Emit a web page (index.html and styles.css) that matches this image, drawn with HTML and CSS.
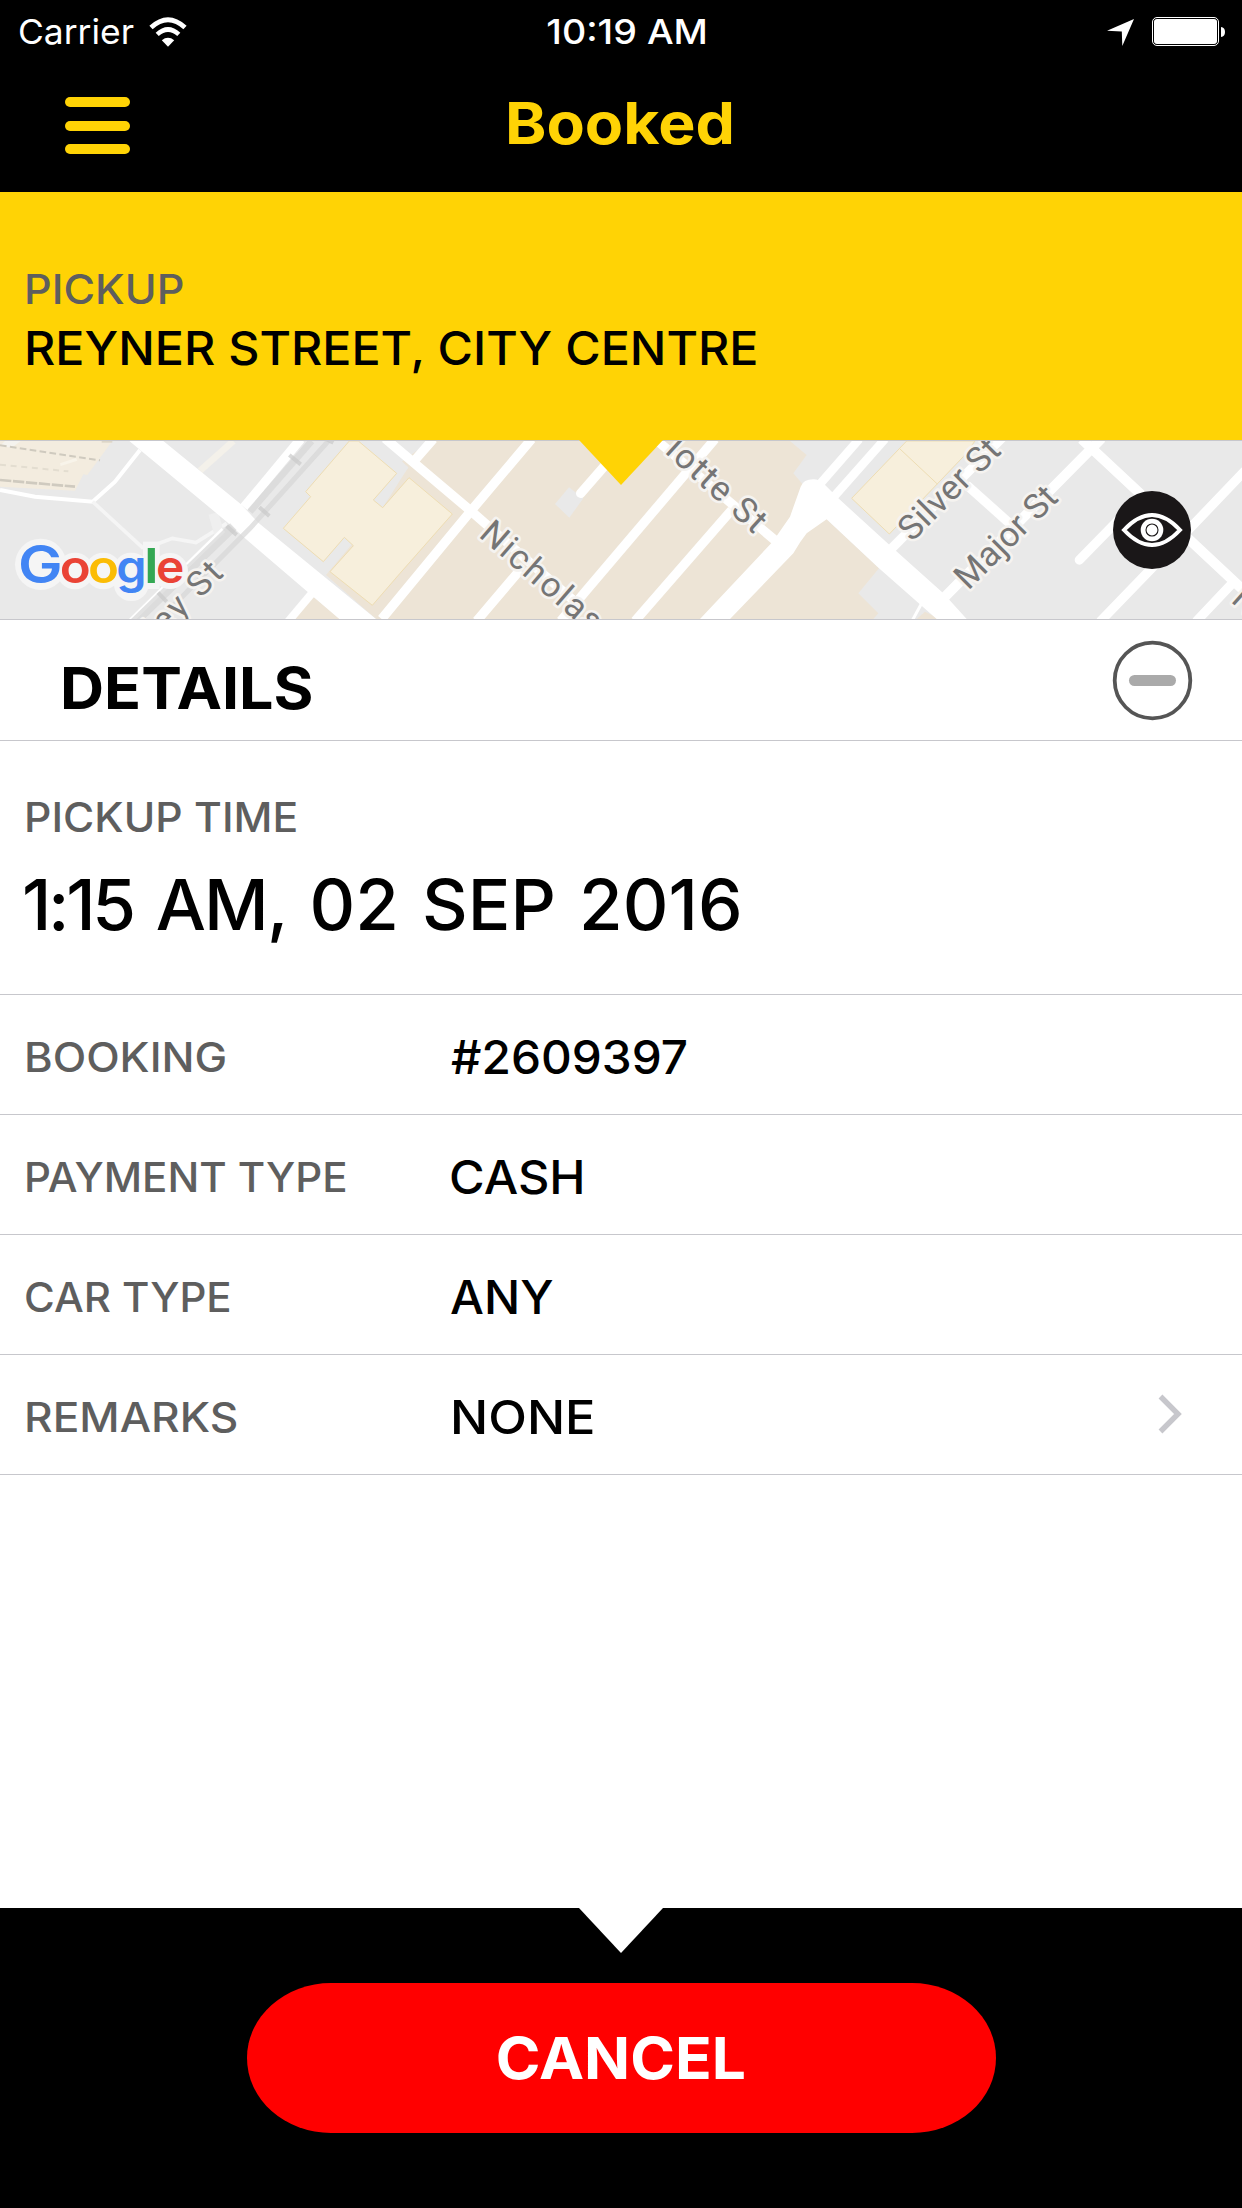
FILE: index.html
```html
<!DOCTYPE html>
<html lang="en">
<head>
<meta charset="utf-8">
<title>Booked</title>
<link rel="stylesheet" href="styles.css">
</head>
<body>
<div class="screen">
  <header class="header">
    <div class="status">
      <div class="status-left">
        <span class="carrier">Carrier</span>
        <svg class="wifi" viewBox="0 0 38 34" width="38" height="34">
          <path d="M19 32.8 12.8 26.2Q19 21.4 25.2 26.2Z" fill="#fff"/>
          <path d="M8.2 20.4Q19 10.6 29.8 20.4" fill="none" stroke="#fff" stroke-width="4.6"/>
          <path d="M2 13.6Q19 -2 36 13.6" fill="none" stroke="#fff" stroke-width="4.8"/>
        </svg>
      </div>
      <span class="clock">10:19 AM</span>
      <div class="status-right">
        <svg viewBox="0 0 27 27" width="27" height="27"><path d="M27 0 15.3 27 14.8 12.5 0 11.8Z" fill="#fff"/></svg>
        <svg class="battery" viewBox="0 0 74 29" width="74" height="29">
          <rect x=".5" y=".5" width="66" height="28" rx="4.5" fill="none" stroke="#fff" stroke-width="1"/>
          <rect x="2" y="2" width="63" height="25" rx="3" fill="#fff"/>
          <path d="M69 10q4 .6 4 5t-4 5Z" fill="#fff"/>
        </svg>
      </div>
    </div>
    <div class="nav">
      <div class="menu"><i></i><i></i><i></i></div>
      <h1 class="title">Booked</h1>
    </div>
  </header>

  <section class="pickup">
    <div class="label pickup-label">PICKUP</div>
    <div class="address">REYNER STREET, CITY CENTRE</div>
    <div class="notch notch-yellow"></div>
  </section>

  <section class="map">
    <svg class="map-art" viewBox="0 33 3726 534" width="1242" height="178" preserveAspectRatio="none">
      <rect y="33" width="3726" height="534" fill="#e9e9e9"/>
      <!-- station -->
      <path d="M0 33H337L262 135 250 133 225 182 0 170Z" fill="#f3ecdf"/>
      <path d="M15 33 0 48 35 53 62 33Z" fill="#f5f3ee"/>
      <g fill="none" stroke="#cfcabf" stroke-width="6">
        <path d="M0 46 300 91" stroke-dasharray="20 10"/>
        <path d="M0 150 225 170" stroke-dasharray="34 5" stroke-width="8"/>
        <path d="M0 104 205 124" stroke-dasharray="18 14" stroke="#e3ddd0"/>
        <path d="M305 35H337" stroke="#ddd6c8"/>
      </g>
      <path d="M180 100 228 84 232 92 182 108Z" fill="#f8f4ea"/>
      <!-- blocks -->
      <path d="M1290 33 1205 95 1225 112 1148 233 978 435 1128 567H2620L2635 550 2575 490 2637 415 2480 268 2410 165 2380 130 2420 75 2370 33Z" fill="#ede4d6"/>
      <path d="M1200 33H1258L1225 62 1200 50ZM1200 88 1225 114 1200 142 1190 130 1200 110Z" fill="#e9e9e9"/>
      <path d="M880 567 940 500 1020 567ZM2750 567 2775 545 2820 567Z" fill="#ede4d6"/>
      <path d="M1048 33H1075L1190 130 1120 210 1148 233 1227 143 1357 252 1200 430 1117 526 990 425 1060 347 1033 322 970 395 850 295 932 200 917 185Z" fill="#f7efdc" stroke="#eeddb3" stroke-width="3"/>
      <path d="M1665 222 1707 172 1750 205 1708 263Z" fill="#e9e9e9"/>
      <path d="M2720 33 2555 205 2668 312 2890 80 2925 33ZM2700 57 2812 162" fill="#f7efdc" stroke="#eeddb3" stroke-width="3"/>
      <!-- minor streets -->
      <g fill="none" stroke="#fff" stroke-width="28">
        <path d="M700 33 600 122" stroke="#f4f1ea" stroke-width="20"/>
        <path d="M0 180 105 200 278 215 345 155 420 60" stroke-width="12"/>
        <path d="M278 215 430 355M450 350 517 325 588 338 680 280" stroke="#f5f5f5" stroke-width="11"/>
        <path d="M640 250 660 320" stroke="#efefef" stroke-width="30"/>
        <path d="M670 300 390 575" stroke-width="16"/>
        <path d="M732 232 902 27"/>
        <path d="M1155 25 1415 245 1730 520"/>
        <path d="M1595 27 1415 240 1145 567"/>
        <path d="M865 574 940 485" stroke-width="24"/>
        <path d="M1300 27 1245 90M1430 573 1560 420"/>
        <path d="M2145 27 1760 480 1682 573M1905 573 2195 240"/>
        <path d="M1965 27 2330 335"/>
        <path d="M1742 190 1825 95" stroke-linecap="round"/>
        <path d="M1755 205 1820 130" stroke="#e9e4dc" stroke-width="2"/>
        <path d="M2440 185 2578 27M2502 200 2655 27" stroke-width="26"/>
        <path d="M2675 355 3010 20M2900 165 3040 290"/>
        <path d="M2835 500 3305 25M3245 27 3730 480" stroke-width="30"/>
        <path d="M3238 390 3370 255" stroke-linecap="round"/>
        <path d="M3300 575 3455 415 3735 122M3588 575 3695 462"/>
        <path d="M2735 575 2765 520" stroke-width="9"/>
      </g>
      <!-- main roads -->
      <path d="M388 33H490L722 222 775 278 1128 567H1018L735 325 680 275Z" fill="#fff"/>
      <path d="M2100 567 2318 335 2370 260 2402 170Q2410 148 2440 148 2458 148 2470 160L2515 205 2685 360 2830 490 2900 567H2810L2637 415 2480 268 2420 310Q2400 335 2380 370L2190 567Z" fill="#fff"/>
      <!-- railway -->
      <g fill="none" stroke="#d5d5d5" stroke-opacity=".7">
        <path d="M935 33 750 245" stroke-width="20"/>
        <path d="M985 33 750 295 480 567" stroke-width="15"/>
        <path d="M700 290 400 580" stroke-width="28"/>
        <path d="M868 75 902 103M778 232 808 258M680 288 710 315M474 488 500 515M975 25 1000 38" stroke="#c9c9c9" stroke-width="12"/>
      </g>
      <!-- street names -->
      <g class="street">
        <text transform="translate(674 434) rotate(-45)" text-anchor="end" textLength="286">ley St</text>
        <text transform="translate(1433 318) rotate(41)" textLength="450">Nicholas</text>
        <text transform="translate(2262 314) rotate(42.5)" text-anchor="end" textLength="366">lotte St</text>
        <text transform="translate(2736 338) rotate(-45)" textLength="384">Silver St</text>
        <text transform="translate(2905 483) rotate(-45)" textLength="388">Major St</text>
        <text transform="translate(3690 514) rotate(42)">N</text>
      </g>
      <!-- light backing behind the logo letters -->
      <g fill="#f5f5f5">
        <circle cx="122" cy="403" r="77"/><circle cx="225" cy="423" r="55"/><circle cx="310" cy="423" r="55"/>
        <rect x="342" y="368" width="104" height="145" rx="50"/><rect x="429" y="335" width="50" height="142"/><circle cx="510" cy="423" r="54"/>
      </g>
      <g class="google">
        <text x="54" y="460" font-size="157" fill="#4285f4" textLength="134" lengthAdjust="spacingAndGlyphs">G</text>
        <text x="179" y="460" font-size="136" fill="#ea4335" textLength="93" lengthAdjust="spacingAndGlyphs">o</text>
        <text x="264" y="460" font-size="136" fill="#fbbc05" textLength="93" lengthAdjust="spacingAndGlyphs">o</text>
        <text x="349" y="460" font-size="136" fill="#4285f4" textLength="91" lengthAdjust="spacingAndGlyphs">g</text>
        <text x="432" y="460" font-size="146" fill="#34a853" textLength="44" lengthAdjust="spacingAndGlyphs">l</text>
        <text x="468" y="460" font-size="136" fill="#ea4335" textLength="85" lengthAdjust="spacingAndGlyphs">e</text>
      </g>
    </svg>
    <svg class="eye" viewBox="-39 -39 78 78" width="78" height="78">
      <circle r="39" fill="#1a1718"/>
      <path d="M-28 0Q0 -30 28 0 0 30 -28 0Z" fill="none" stroke="#fff" stroke-width="4"/>
      <circle r="11.3" fill="#fff"/>
      <circle r="6" fill="none" stroke="#1a1718" stroke-width="1.1"/>
    </svg>
  </section>

  <section class="details-head">
    <h2>DETAILS</h2>
    <svg viewBox="0 0 81 81" width="81" height="81">
      <circle cx="40.5" cy="40.5" r="37.8" fill="none" stroke="#555" stroke-width="3.8"/>
      <rect x="17" y="35" width="47" height="11" rx="5.5" fill="#aaa"/>
    </svg>
  </section>

  <section class="time">
    <div class="label time-label">PICKUP TIME</div>
    <div class="time-value"><span class="hour">1:15</span> <span class="half">AM,</span> 02 SEP 2016</div>
  </section>

  <dl class="rows">
    <div class="row"><dt class="label k-booking">BOOKING</dt><dd class="v-booking">#2609397</dd></div>
    <div class="row"><dt class="label k-payment">PAYMENT TYPE</dt><dd class="v-payment">CASH</dd></div>
    <div class="row"><dt class="label k-car">CAR TYPE</dt><dd class="v-car">ANY</dd></div>
    <div class="row"><dt class="label k-remarks">REMARKS</dt><dd class="v-remarks">NONE</dd>
      <svg class="chevron" viewBox="0 0 24 40" width="24" height="40"><path d="M2.5 2.5 20 20 2.5 37.5" fill="none" stroke="#c7c7cc" stroke-width="5.4"/></svg>
    </div>
  </dl>

  <footer class="footer">
    <div class="notch notch-white"></div>
    <button class="cancel"><span>CANCEL</span></button>
  </footer>
</div>
</body>
</html>
```
FILE: styles.css
```css
* { box-sizing: border-box; }
body { margin: 0; background: #fff; font-family: Inter, "Liberation Sans", sans-serif; color: #000; }
h1, h2, dl, dd { margin: 0; }
svg { display: block; flex: none; }

.screen { width: 1242px; height: 2208px; display: flex; flex-direction: column; overflow: hidden; }

.header { height: 192px; background: #000; }
.status { height: 62px; display: grid; grid-template-columns: 1fr auto 1fr; align-items: center; color: #fff; line-height: 64px; font-size: 34.5px; white-space: nowrap; }
.status-left { display: flex; align-items: center; padding-left: 18px; gap: 18px; }
.carrier { transform: scaleX(1.026); transform-origin: left; }
.wifi { margin-top: -3px; }
.clock { font-weight: 500; transform: translateX(6px) scaleX(1.09); }
.status-right { display: flex; align-items: center; justify-content: flex-end; gap: 18px; padding-right: 16px; }
.battery { margin-top: -2px; }

.nav { height: 130px; padding: 0 0 8px 65px; display: grid; grid-template-columns: 65px 1fr 130px; align-items: center; }
.menu { display: grid; gap: 13.5px; margin-top: 5px; }
.menu i { display: block; height: 10px; border-radius: 5px; background: #ffd305; }
.title { color: #ffd305; font-size: 58px; font-weight: 700; line-height: 70px; text-align: center; transform: translateX(-1px) scaleX(1.08); }

.label { font-size: 40.5px; font-weight: 500; line-height: 54px; color: #5e5e5e; transform-origin: left; white-space: nowrap; }

.pickup { position: relative; height: 248px; padding: 71px 24px 0; background: #ffd305; }
.pickup-label { transform: scaleX(1.065); }
.address { margin-top: 1px; font-size: 46.5px; font-weight: 500; line-height: 60px; transform: scaleX(1.04); transform-origin: left; white-space: nowrap; }

.notch { position: absolute; left: 50%; z-index: 2; width: 84px; height: 45px; margin-left: -42px; clip-path: polygon(0 0, 100% 0, 50% 100%); }
.notch-yellow { top: 100%; background: #ffd305; }
.notch-white { top: 0; background: #fff; }

.map { position: relative; height: 180px; border-top: 1px solid #c7c7cc; border-bottom: 1px solid #c7c7cc; }
.street { font-family: Roboto, sans-serif; font-size: 104px; fill: #757575; stroke: #f5f3f0; stroke-width: 16px; stroke-linejoin: round; paint-order: stroke; }
.google { font-family: Inter, sans-serif; font-weight: 600; }
.eye { position: absolute; left: 1113px; top: 50px; }

.details-head { height: 121px; padding: 0 49px 0 60px; display: flex; align-items: center; justify-content: space-between; border-bottom: 1px solid #c7c7cc; }
.details-head h2 { margin-top: 16px; font-size: 58px; line-height: 70px; font-weight: 700; transform: scaleX(1.052); transform-origin: left; }

.time { height: 254px; padding: 50px 22px 0 24px; border-bottom: 1px solid #c7c7cc; }
.time-label { transform: scaleX(1.054); }
.time-value { margin: 20px 0 0 -2px; font-size: 69.5px; font-weight: 500; line-height: 80px; word-spacing: 4px; transform: scaleX(1.02); transform-origin: left; white-space: nowrap; }
.hour { letter-spacing: -3.3px; }
.half { letter-spacing: -1.8px; }

.row { height: 120px; padding: 5px 60px 0 24px; display: grid; grid-template-columns: 425px 1fr auto; align-items: center; border-bottom: 1px solid #c7c7cc; }
.row .label { justify-self: start; padding-top: 2px; }
.row dd { font-size: 46.5px; font-weight: 500; line-height: 60px; transform-origin: left; }
.k-booking { transform: scaleX(1.078); }
.k-payment { transform: scaleX(1.038); }
.k-car { transform: scaleX(1.037); }
.k-remarks { transform: scaleX(1.092); }
.row .v-booking { padding-left: 2px; transform: scaleX(1.026); }
.v-payment { transform: scaleX(1.047); }
.row .v-car { padding-left: 1px; transform: scaleX(1.029); }
.row .v-remarks { padding-left: 1px; transform: scaleX(1.085); }
.chevron { margin-top: -6px; }

.footer { position: relative; height: 300px; margin-top: auto; padding-top: 75px; background: #000; }
.cancel { display: block; width: 749px; height: 150px; margin: 0 auto; padding: 0; border: 0; border-radius: 84px / 75px; background: #f00; color: #fff; font: 700 58px/150px Inter, "Liberation Sans", sans-serif; }
.cancel span { display: inline-block; transform: scaleX(1.043); }
```
